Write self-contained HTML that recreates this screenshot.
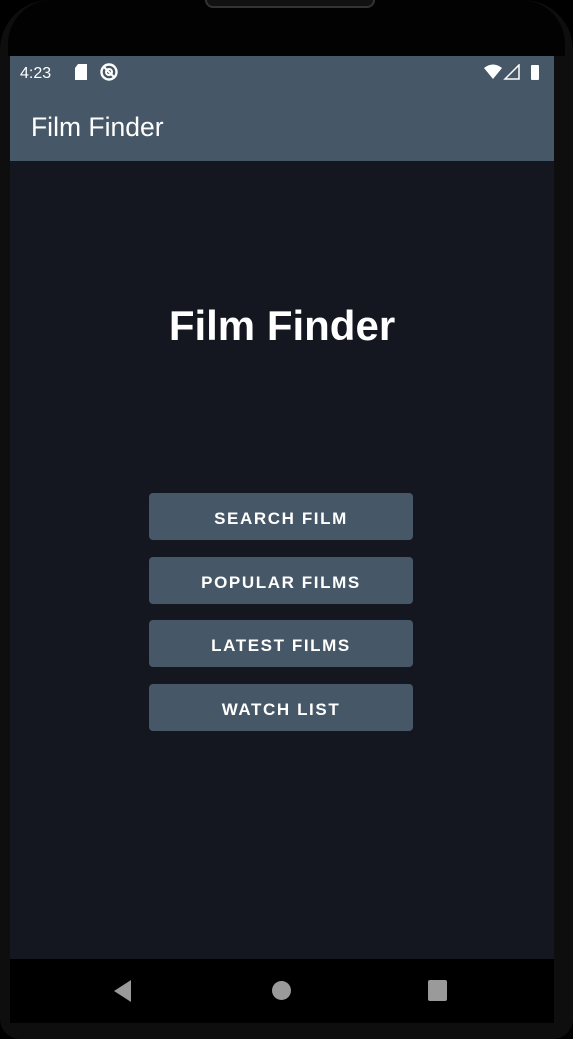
<!DOCTYPE html>
<html><head><style>
*{margin:0;padding:0;box-sizing:border-box}
body{width:573px;height:1039px;background:#000;position:relative;overflow:hidden;font-family:"Liberation Sans",sans-serif}
.frame{position:absolute;left:0;top:0;width:573px;height:1039px;background:#0e0e0e;border-radius:50px 50px 20px 20px}
.top{position:absolute;left:8px;top:0;width:557px;height:56px;background:#020202;border-radius:44px 44px 0 0}
.notch{position:absolute;left:197px;top:-4px;width:170px;height:12px;border:2px solid #333;border-top:none;border-radius:0 0 8px 8px;background:#111}
.screen{position:absolute;left:10px;top:56px;width:544px;height:903px;background:#151720}
.status{position:absolute;left:0;top:0;width:544px;height:37px;background:#465767;color:#fff;font-size:16px}
.appbar{position:absolute;left:0;top:37px;width:544px;height:68px;background:#465767;color:#fff;font-size:26.5px;line-height:68px;padding-left:21px}
.title{position:absolute;left:0;width:544px;top:246px;text-align:center;color:#fff;font-weight:bold;font-size:42px}
.btn{position:absolute;left:139px;width:264px;height:47px;background:#465767;border-radius:4px;color:#fff;font-size:17px;font-weight:bold;letter-spacing:1.6px;text-align:center;line-height:51px}
.nav{position:absolute;left:10px;top:959px;width:544px;height:64px;background:#000}
</style></head><body>
<div class="frame"></div>
<div class="top"><div class="notch"></div></div>
<div class="screen">
 <div class="status">
  <span style="position:absolute;left:10px;top:9px">4:23</span>
  <svg style="position:absolute;left:64px;top:8px" width="14" height="16"><path d="M4 0H13V16H1V4Z" fill="#fff"/></svg>
  <svg style="position:absolute;left:89px;top:6px" width="20" height="20"><circle cx="10" cy="10" r="7.5" fill="none" stroke="#fff" stroke-width="2.4"/><circle cx="10" cy="10" r="3" fill="none" stroke="#fff" stroke-width="2"/><path d="M4 4L16 16" stroke="#fff" stroke-width="2"/></svg>
  <svg style="position:absolute;left:474px;top:8px" width="60" height="18"><path d="M0 4Q9 -3 18 4L9 15Z" fill="#fff"/><path d="M35 1V15H21Z" fill="none" stroke="#fff" stroke-width="1.5"/><rect x="47" y="1" width="8" height="15" rx="1" fill="#fff"/></svg>
 </div>
 <div class="appbar">Film Finder</div>
 <div class="title">Film Finder</div>
 <div class="btn" style="top:437px">SEARCH FILM</div>
 <div class="btn" style="top:501px">POPULAR FILMS</div>
 <div class="btn" style="top:564px">LATEST FILMS</div>
 <div class="btn" style="top:628px">WATCH LIST</div>
</div>
<div class="nav">
 <svg style="position:absolute;left:103px;top:20px" width="20" height="24"><path d="M18 1V23L1 12Z" fill="#9a9a9a"/></svg>
 <div style="position:absolute;left:262px;top:22px;width:19px;height:19px;border-radius:50%;background:#9a9a9a"></div>
 <div style="position:absolute;left:418px;top:21px;width:19px;height:21px;border-radius:2px;background:#9a9a9a"></div>
</div>
</body></html>
